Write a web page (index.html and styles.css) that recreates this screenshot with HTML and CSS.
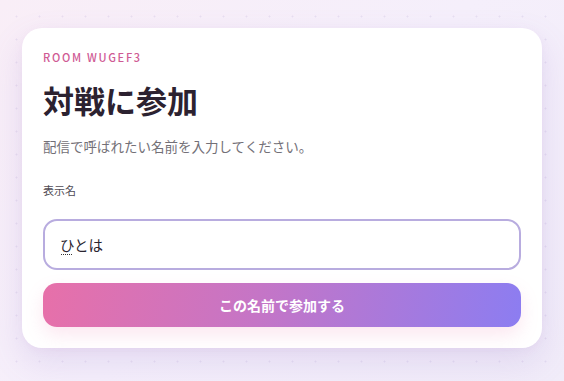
FILE: index.html
```html
<!DOCTYPE html>
<html lang="ja">
<head>
    <meta charset="UTF-8">
    <meta name="viewport" content="width=device-width, initial-scale=1.0">
    <title>対戦に参加</title>
    <link rel="stylesheet" href="styles.css">
</head>
<body>
    <div class="card">
        <form id="joinForm">
            <p class="room-code">ROOM WUGEF3</p>
            <h1>対戦に参加</h1>
            <p class="note">配信で呼ばれたい名前を入力してください。</p>
            <label for="displayName">表示名</label>
            <div class="input-wrap">
                <input type="text" id="displayName" value="ひとは">
                <span class="ime-mark"></span>
            </div>
            <button type="button" id="joinBtn">この名前で参加する</button>
        </form>
    </div>
</body>
</html>
```

FILE: styles.css
```css
html {
    background-color: #f4eefa;
}
body {
    font-family: 'Noto Sans CJK JP', 'Noto Sans', sans-serif;
    margin: 0;
    padding: 28px 22px 33px;
    min-height: 100vh;
    box-sizing: border-box;
    background:
        radial-gradient(circle, rgba(180,160,210,0.22) 0.8px, transparent 1.2px) 5px 5px / 23px 23px,
        linear-gradient(135deg, #f9eef7 0%, #f5effb 50%, #f1ecf9 100%);
}
.card {
    background: #ffffff;
    border-radius: 20px;
    padding: 21px 21px 21px;
    box-shadow: 0 14px 34px rgba(130,100,190,0.16), 0 2px 8px rgba(200,150,200,0.08);
}
.room-code {
    margin: 0;
    font-size: 11px;
    line-height: 16px;
    font-weight: 500;
    letter-spacing: 1.7px;
    color: #cf5a94;
}
h1 {
    margin: 15px 0 0;
    font-size: 31px;
    line-height: 40px;
    font-weight: 700;
    color: #2c2230;
}
.note {
    margin: 16px 0 0;
    font-size: 13.5px;
    line-height: 20px;
    color: #737077;
}
label {
    display: block;
    margin-top: 26px;
    font-size: 11px;
    line-height: 16px;
    font-weight: 400;
    color: #504b54;
}
.input-wrap {
    position: relative;
    margin-top: 21px;
}
input {
    display: block;
    width: 100%;
    box-sizing: border-box;
    height: 51px;
    padding: 0 15px;
    border: 2px solid #b8acdf;
    border-radius: 14px;
    font-family: inherit;
    font-size: 14.5px;
    color: #2a2530;
    background: #ffffff;
    outline: none;
}
.ime-mark {
    position: absolute;
    left: 18px;
    top: 35px;
    width: 11px;
    border-top: 1px dotted #333;
}
button {
    display: block;
    width: 100%;
    height: 44px;
    margin-top: 13px;
    border: none;
    border-radius: 14px;
    background: linear-gradient(100deg, #e770a9 0%, #c575c6 45%, #8c7df1 100%);
    color: #ffffff;
    font-family: inherit;
    font-size: 14px;
    font-weight: 700;
    cursor: pointer;
    box-shadow: 0 8px 18px rgba(236,120,170,0.18);
}
```
